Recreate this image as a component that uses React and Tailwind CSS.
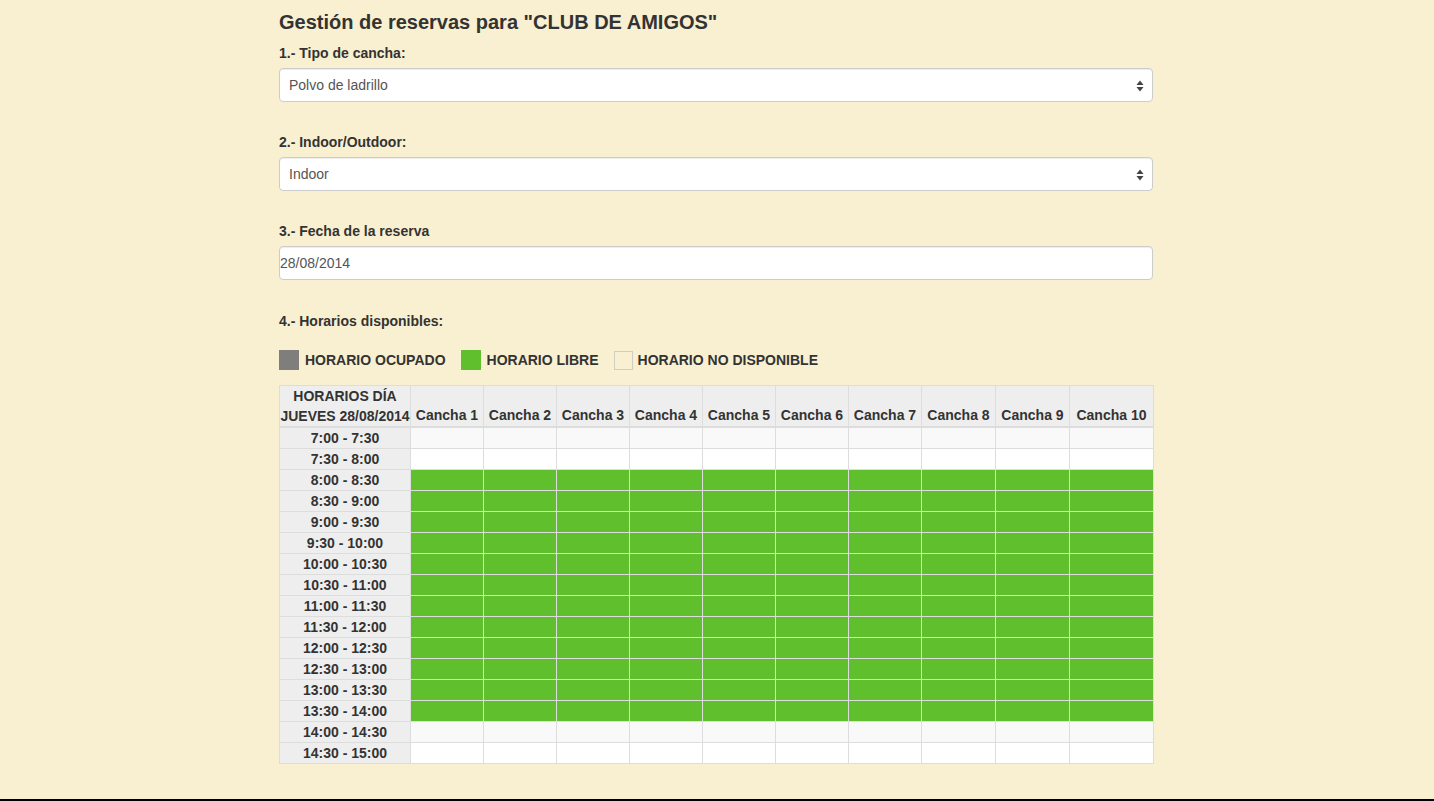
import React from 'react';

const SLOTS = [
    '7:00 - 7:30', '7:30 - 8:00', '8:00 - 8:30', '8:30 - 9:00', '9:00 - 9:30', '9:30 - 10:00',
    '10:00 - 10:30', '10:30 - 11:00', '11:00 - 11:30', '11:30 - 12:00', '12:00 - 12:30',
    '12:30 - 13:00', '13:00 - 13:30', '13:30 - 14:00', '14:00 - 14:30', '14:30 - 15:00',
];

const COLS = [73, 73, 73, 73, 73, 73, 73, 74, 74, 84];

function Arrows() {
    return (
        <svg width="8" height="12" viewBox="0 0 8 12" className="absolute right-[8px] top-[11px]">
            <path d="M4 0.5 L7.5 5 L0.5 5 Z" fill="#444" />
            <path d="M4 11.5 L7.5 7 L0.5 7 Z" fill="#444" />
        </svg>
    );
}

function SelectBox({ value }) {
    return (
        <div className="relative mt-[5px] h-[34px] rounded-[4px] border border-[#ccc] bg-white shadow-[inset_0_1px_1px_rgba(0,0,0,0.075)] flex items-center pl-[9px] text-[14px] text-[#555]">
            {value}
            <Arrows />
        </div>
    );
}

function Label({ children, className = '' }) {
    return <div className={`h-[20px] leading-[20px] text-[14px] font-bold text-[#333] ${className}`}>{children}</div>;
}

export default function App() {
    return (
        <div className="h-[801px] bg-[#f9f0d1] border-b-2 border-black box-border" style={{ fontFamily: '"Liberation Sans", Arial, sans-serif' }}>
            <div className="w-[874px] ml-[279px] pt-[10px] flex flex-col">
                <h1 className="h-[24px] leading-[24px] text-[20px] font-bold text-[#333]">Gestión de reservas para "CLUB DE AMIGOS"</h1>

                <Label className="mt-[9px]">1.- Tipo de cancha:</Label>
                <SelectBox value="Polvo de ladrillo" />

                <Label className="mt-[30px]">2.- Indoor/Outdoor:</Label>
                <SelectBox value="Indoor" />

                <Label className="mt-[30px]">3.- Fecha de la reserva</Label>
                <div className="mt-[5px] h-[34px] rounded-[4px] border border-[#ccc] bg-white shadow-[inset_0_1px_1px_rgba(0,0,0,0.075)] flex items-center pl-[0px] text-[14px] text-[#555]">
                    28/08/2014
                </div>

                <Label className="mt-[31px]">4.- Horarios disponibles:</Label>

                <div className="mt-[19px] h-[20px] flex items-center text-[14px] font-bold text-[#333]">
                    <span className="w-[20px] h-[20px] bg-[#807e7d]" />
                    <span className="ml-[6px]">HORARIO OCUPADO</span>
                    <span className="ml-[15px] w-[20px] h-[20px] bg-[#5fbf2d]" />
                    <span className="ml-[6px]">HORARIO LIBRE</span>
                    <span className="ml-[15px] w-[19px] h-[19px] border border-[#d0ccc0]" />
                    <span className="ml-[5px]">HORARIO NO DISPONIBLE</span>
                </div>

                <table className="mt-[15px] w-[874px] table-fixed border-collapse text-[14px] text-[#333]">
                    <colgroup>
                        <col className="w-[131px]" />
                        {COLS.map((w, i) => <col key={i} style={{ width: w }} />)}
                    </colgroup>
                    <thead>
                        <tr>
                            <th className="h-[41px] p-0 border border-[#ddd] border-b-2 bg-[#eee] font-bold leading-[20px] text-center align-bottom whitespace-nowrap">
                                HORARIOS DÍA<br />JUEVES 28/08/2014
                            </th>
                            {COLS.map((_, i) => (
                                <th key={i} className="p-0 pb-[1px] border border-[#ddd] border-b-2 bg-[#eee] font-bold leading-[20px] text-center align-bottom whitespace-nowrap">
                                    Cancha {i + 1}
                                </th>
                            ))}
                        </tr>
                    </thead>
                    <tbody>
                        {SLOTS.map((slot, r) => {
                            const green = r >= 2 && r <= 13;
                            const rowBg = r % 2 === 0 ? 'bg-[#f9f9f9]' : 'bg-white';
                            return (
                                <tr key={slot}>
                                    <th className="h-[21px] p-0 border border-[#ddd] bg-[#eee] font-bold leading-[20px] text-center">{slot}</th>
                                    {COLS.map((_, i) => (
                                        <td key={i} className={`p-0 border border-[#ddd] ${green ? 'bg-[#5fbf2d]' : rowBg}`} />
                                    ))}
                                </tr>
                            );
                        })}
                    </tbody>
                </table>
            </div>
        </div>
    );
}
